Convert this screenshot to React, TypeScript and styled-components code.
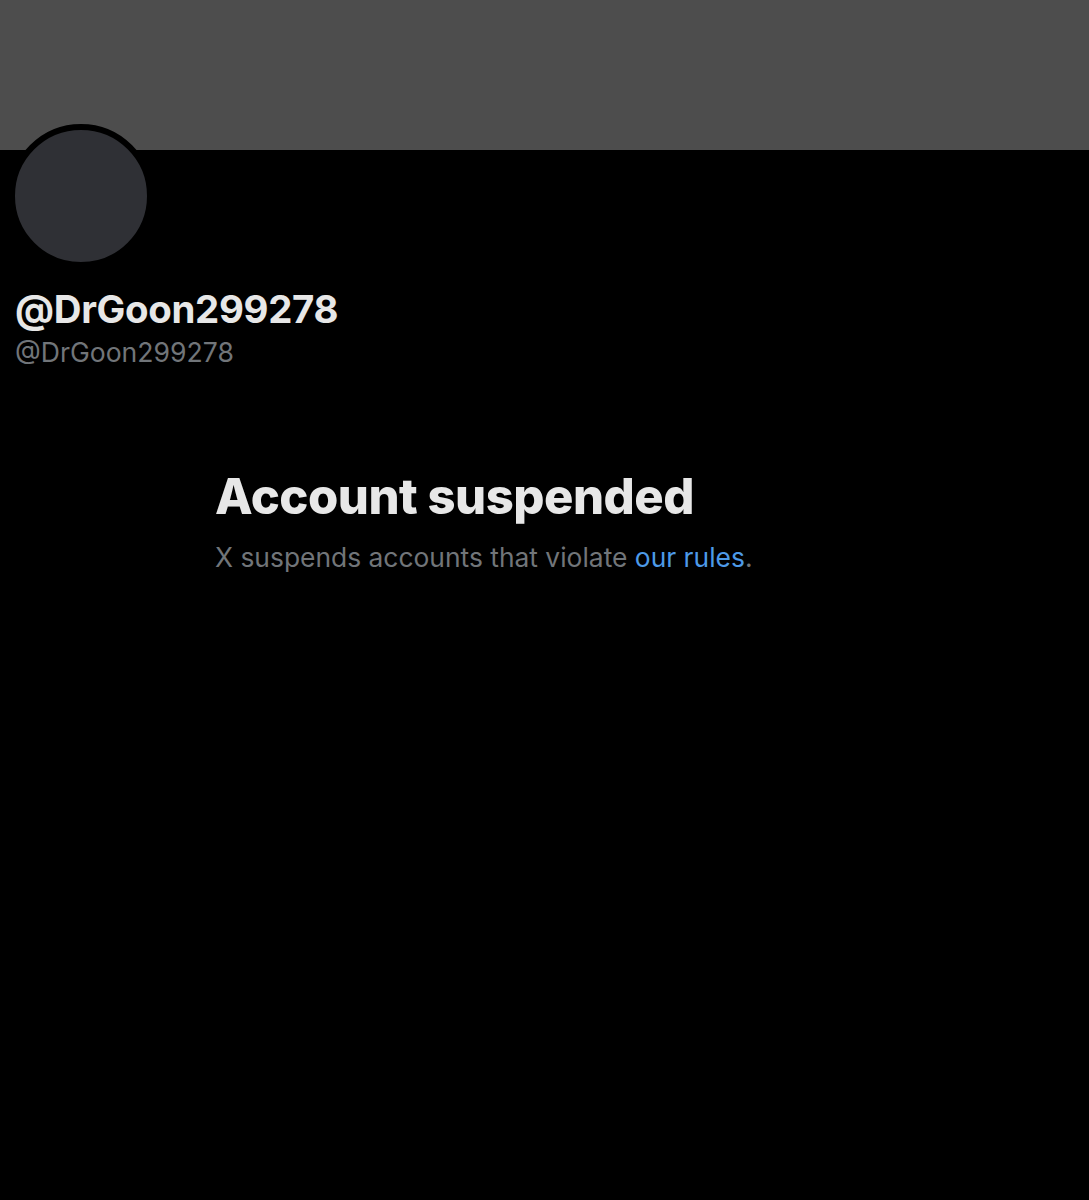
import React from "react";
import styled, { createGlobalStyle } from "styled-components";

const Global = createGlobalStyle`
  html, body { margin: 0; padding: 0; background: #000; }
  body { font-family: Inter, "Noto Sans", sans-serif; -webkit-font-smoothing: antialiased; }
  #root { min-height: 1200px; background: #000; }
`;

const Page = styled.div`
  width: 1089px;
  min-height: 1200px;
  background: #000;
  display: flex;
  flex-direction: column;
`;

const Banner = styled.div`
  height: 150px;
  background: #4d4d4d;
`;

const Profile = styled.div`
  display: flex;
  flex-direction: column;
  padding-left: 9px;
`;

const Avatar = styled.div`
  width: 132px;
  height: 132px;
  margin-top: -26px;
  border-radius: 50%;
  border: 6px solid #000;
  background: #2f3035;
`;

const Names = styled.div`
  display: flex;
  flex-direction: column;
  padding-left: 6px;
  margin-top: 18px;
`;

const DisplayName = styled.div`
  color: #e7e7e7;
  font-weight: 700;
  font-size: 38.4px;
  line-height: 46px;
  letter-spacing: -0.3px;
`;

const Handle = styled.div`
  margin-top: 4px;
  color: #717579;
  font-size: 26.6px;
  line-height: 32px;
  font-weight: 400;
`;

const Notice = styled.div`
  display: flex;
  flex-direction: column;
  padding-left: 215px;
  margin-top: 99px;
`;

const Title = styled.h1`
  margin: 0;
  color: #e7e7e7;
  font-size: 49px;
  line-height: 60px;
  font-weight: 800;
  letter-spacing: -0.5px;
`;

const Sub = styled.p`
  margin: 14px 0 0;
  color: #717579;
  font-size: 26.4px;
  line-height: 32px;
  font-weight: 400;
`;

const RulesLink = styled.a`
  color: #4d9ae8;
  text-decoration: none;
`;

export default function App() {
  return (
    <Page>
      <Global />
      <Banner />
      <Profile>
        <Avatar />
        <Names>
          <DisplayName>@DrGoon299278</DisplayName>
          <Handle>@DrGoon299278</Handle>
        </Names>
      </Profile>
      <Notice>
        <Title>Account suspended</Title>
        <Sub>
          X suspends accounts that violate <RulesLink href="#">our rules</RulesLink>.
        </Sub>
      </Notice>
    </Page>
  );
}
